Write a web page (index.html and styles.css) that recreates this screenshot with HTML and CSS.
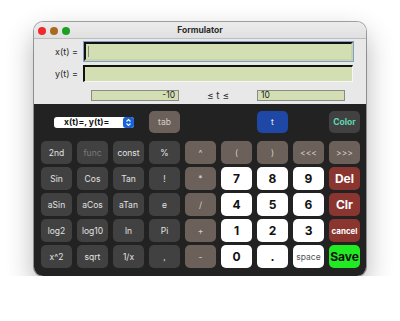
FILE: index.html
```html
<!DOCTYPE html>
<html lang="en">
<head>
    <meta charset="UTF-8">
    <title>Formulator</title>
    <link rel="stylesheet" href="styles.css">
</head>
<body>

<div class="window">
    <div class="titlebar">
        <div class="lights">
            <span class="light red"></span>
            <span class="light amber"></span>
            <span class="light green"></span>
        </div>
        <div class="title">Formulator</div>
    </div>

    <div class="form">
        <div class="row row-x">
            <label>x(t) =</label>
            <div class="field focus"><span class="caret"></span></div>
        </div>
        <div class="row row-y">
            <label>y(t) =</label>
            <div class="field"></div>
        </div>
        <div class="range">
            <div class="small-field right">-10</div>
            <div class="range-label">≤ t ≤</div>
            <div class="small-field">10</div>
        </div>
    </div>

    <div class="pad">
        <div class="grid top">
            <div class="select">
                <span>x(t)=, y(t)=</span>
                <span class="stepper">
                    <svg width="7" height="9" viewBox="0 0 7 9"><path d="M1.5 3.5 L3.5 1.5 L5.5 3.5 M1.5 5.5 L3.5 7.5 L5.5 5.5" fill="none" stroke="#fff" stroke-width="1.1"/></svg>
                </span>
            </div>
            <button class="key op c4">tab</button>
            <button class="key blue c7">t</button>
            <button class="key fn color c9">Color</button>
        </div>

        <div class="grid keys">
            <button class="key fn">2nd</button>
            <button class="key fn dim">func</button>
            <button class="key fn">const</button>
            <button class="key fn">%</button>
            <button class="key op">^</button>
            <button class="key op">(</button>
            <button class="key op">)</button>
            <button class="key op">&lt;&lt;&lt;</button>
            <button class="key op">&gt;&gt;&gt;</button>

            <button class="key fn">Sin</button>
            <button class="key fn">Cos</button>
            <button class="key fn">Tan</button>
            <button class="key fn">!</button>
            <button class="key op">*</button>
            <button class="key num">7</button>
            <button class="key num">8</button>
            <button class="key num">9</button>
            <button class="key red">Del</button>

            <button class="key fn">aSin</button>
            <button class="key fn">aCos</button>
            <button class="key fn">aTan</button>
            <button class="key fn">e</button>
            <button class="key op">/</button>
            <button class="key num">4</button>
            <button class="key num">5</button>
            <button class="key num">6</button>
            <button class="key red">Clr</button>

            <button class="key fn">log2</button>
            <button class="key fn">log10</button>
            <button class="key fn">ln</button>
            <button class="key fn">Pi</button>
            <button class="key op">+</button>
            <button class="key num">1</button>
            <button class="key num">2</button>
            <button class="key num">3</button>
            <button class="key red cancel">cancel</button>

            <button class="key fn">x^2</button>
            <button class="key fn">sqrt</button>
            <button class="key fn">1/x</button>
            <button class="key fn">,</button>
            <button class="key op">-</button>
            <button class="key num">0</button>
            <button class="key num">.</button>
            <button class="key num space">space</button>
            <button class="key save">Save</button>
        </div>
    </div>
</div>

</body>
</html>
```

FILE: styles.css
```css
body {
    margin: 0;
    background-color: #fff;
    font-family: Inter, "Liberation Sans", sans-serif;
}

.window {
    margin: 22px 0 0 34px;
    width: 332px;
    height: 254px;
    border-radius: 9px;
    overflow: hidden;
    display: flex;
    flex-direction: column;
    box-shadow: 0 0 0 1px rgba(0, 0, 0, 0.35), 0 12px 28px rgba(0, 0, 0, 0.3);
}

.titlebar {
    position: relative;
    height: 16px;
    background: linear-gradient(#ececec, #e0e0e0);
    border-bottom: 1px solid #bdbdbd;
    display: flex;
    align-items: center;
    justify-content: center;
}

.lights {
    position: absolute;
    left: 4px;
    top: 5px;
    display: flex;
    gap: 4px;
}

.light {
    width: 8px;
    height: 8px;
    border-radius: 50%;
}

.light.red { background-color: #f2282a; }
.light.amber { background-color: #a9691f; }
.light.green { background-color: #1c9f22; }

.title {
    font-size: 8.5px;
    font-weight: bold;
    color: #2b2b2b;
}

.form {
    background-color: #e8e8e8;
    height: 65px;
    padding-top: 3px;
    box-sizing: border-box;
}

.row {
    display: flex;
    align-items: center;
    gap: 5px;
    padding-right: 13px;
}

.row label {
    width: 44px;
    text-align: right;
    font-size: 9px;
    color: #2a2a2a;
}

.row-x {
    height: 19px;
}

.row-y {
    height: 17px;
    margin-top: 4px;
}

.field {
    flex: 1;
    height: 100%;
    box-sizing: border-box;
    background-color: #d3dfb3;
    border-top: 2px solid #111;
    border-left: 2px solid #111;
    border-right: 1px solid #f6f6f6;
    border-bottom: 1px solid #f6f6f6;
    display: flex;
    align-items: center;
}

.field.focus {
    margin-left: 1px;
    border: 2px solid #111;
    border-right-color: #c8d4a8;
    border-bottom-color: #c8d4a8;
    outline: 1.5px solid #7f9fca;
}

.caret {
    width: 1px;
    height: 11px;
    margin-left: 2px;
    background-color: #888;
}

.range {
    display: flex;
    align-items: center;
    margin-top: 7px;
    padding-left: 57px;
}

.small-field {
    width: 88px;
    height: 11px;
    box-sizing: border-box;
    border: 1px solid #8a8a8a;
    background-color: #d3dfb3;
    font-size: 8.5px;
    line-height: 9px;
    padding: 0 3px;
    color: #222;
}

.small-field.right {
    text-align: right;
}

.range-label {
    width: 78px;
    text-align: center;
    font-size: 10px;
    color: #333;
}

.pad {
    flex: 1;
    background-color: #222;
    padding: 7px 0 0 7px;
}

.grid {
    display: grid;
    grid-template-columns: repeat(9, 31px);
    column-gap: 5px;
}

.grid.top {
    grid-template-rows: 22px;
    align-items: center;
    margin-bottom: 8px;
}

.grid.keys {
    grid-template-rows: repeat(5, 23px);
    row-gap: 3px;
}

.key {
    border: none;
    border-radius: 5px;
    padding: 0;
    font-family: inherit;
    font-size: 8.5px;
    height: 100%;
    cursor: pointer;
}

.fn {
    background-color: #414141;
    color: #e2e2e2;
}

.fn.dim {
    color: #7a7a7a;
}

.op {
    background-color: #6c615a;
    color: #d6d0cc;
}

.num {
    background-color: #fff;
    color: #111;
    font-weight: bold;
    font-size: 12px;
}

.num.space {
    font-weight: normal;
    font-size: 8.5px;
    color: #555;
}

.red {
    background-color: #8b3530;
    color: #fff;
    font-weight: bold;
    font-size: 12px;
}

.red.cancel {
    font-size: 8px;
}

.save {
    background-color: #22ea22;
    color: #111;
    font-weight: bold;
    font-size: 12px;
}

.blue {
    background-color: #1f47a6;
    color: #e8ecf6;
}

.color {
    color: #5fd7b4;
    font-weight: bold;
}

.c4 { grid-column: 4; }
.c7 { grid-column: 7; }
.c9 { grid-column: 9; }

.select {
    grid-column: 1 / 4;
    justify-self: center;
    width: 80px;
    height: 11px;
    background-color: #fff;
    border-radius: 3px;
    display: flex;
    align-items: center;
    justify-content: space-between;
    font-size: 8.5px;
    font-weight: bold;
    color: #111;
    padding-left: 10px;
    box-sizing: border-box;
    margin-left: 3px;
}

.stepper {
    width: 11px;
    height: 11px;
    background-color: #1a63d6;
    border-radius: 3px;
    display: flex;
    align-items: center;
    justify-content: center;
}
```
